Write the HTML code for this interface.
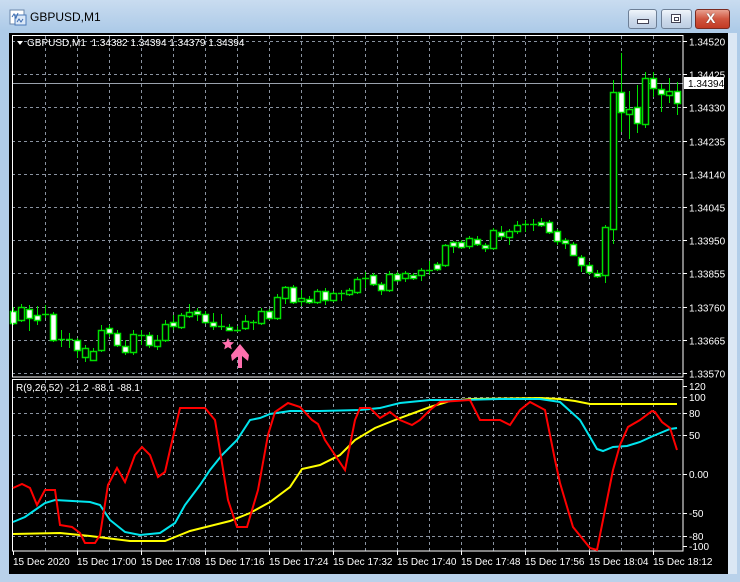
<!DOCTYPE html>
<html><head><meta charset="utf-8"><style>
html,body{margin:0;padding:0;width:740px;height:582px;overflow:hidden;background:#c4d8ee;font-family:"Liberation Sans",sans-serif}
#win{position:absolute;left:0;top:0;width:740px;height:582px;background:linear-gradient(#c9dcf0,#aecbe8 30px,#b9d1ea);}
.title{position:absolute;left:30px;top:10px;font-size:12px;color:#000}
.btn{position:absolute;top:9px;height:18px;border:1px solid #6d7f96;border-radius:3px;background:linear-gradient(#f0f5fb,#cfdcec 50%,#bccde2)}
#black{position:absolute;left:9px;top:33px;width:719px;height:541px;background:#000}
svg{position:absolute;left:0;top:0}
text{font-family:"Liberation Sans",sans-serif;font-size:10px;fill:#fff}
</style></head><body>
<div id="win">
<svg width="20" height="18" style="left:9px;top:9px"><rect x="1" y="1" width="14" height="14" fill="#fff" stroke="#6b87aa"/><rect x="6" y="6" width="11" height="10" fill="#dbe8f7" stroke="#4a79b8"/><path d="M3 8 l2 -3 l2 4 l2 -5" stroke="#3a6ab0" fill="none"/><path d="M8 13 l2 -3 l2 3 l2 -3" stroke="#3a6ab0" fill="none"/></svg>
<div class="title">GBPUSD,M1</div>
<div class="btn" style="left:628px;width:27px"><div style="position:absolute;left:8px;top:9px;width:10px;height:3px;background:#fff;border:1px solid #445"></div></div>
<div class="btn" style="left:661px;width:29px"><div style="position:absolute;left:9px;top:4px;width:8px;height:7px;border:1px solid #445;background:#fff"><div style="position:absolute;left:2px;top:2px;width:3px;height:2px;border:1px solid #445"></div></div></div>
<div class="btn" style="left:695px;width:33px;border-color:#7a2a20;background:linear-gradient(#e8a090,#d0553f 50%,#c23a24)"><div style="position:absolute;left:10px;top:0px;color:#fff;font-weight:bold;font-size:14px;text-shadow:0 0 1px #333">X</div></div>
<div style="position:absolute;left:728px;top:33px;width:9px;height:541px;background:#dbe7f4"></div>
<div id="black"></div>
<svg id="s" width="740" height="582"></svg>
</div>
<script>
var S=document.getElementById('s'),h='';
function L(x1,y1,x2,y2,c,w,d){h+='<line x1="'+x1+'" y1="'+y1+'" x2="'+x2+'" y2="'+y2+'" stroke="'+c+'" stroke-width="'+(w||1)+'"'+(d?' stroke-dasharray="3,3"':'')+'/>';}
function T(x,y,t,f){h+='<text x="'+x+'" y="'+y+'"'+(f?' style="fill:'+f+'"':'')+'>'+t+'</text>';}
var gc='#8a93a0';
// vertical grid
for(var x=45;x<683;x+=32){L(x+.5,36,x+.5,377,gc,1,1);L(x+.5,380,x+.5,551,gc,1,1);}
// main horizontal grid
var pl=['1.34520','1.34425','1.34330','1.34235','1.34140','1.34045','1.33950','1.33855','1.33760','1.33665','1.33570'];
for(var i=0;i<11;i++){var y=Math.round(41+i*33.2)+.5;L(12,y,683,y,gc,1,1);L(683,y,687,y,'#fff');T(689,y+4,pl[i]);}
// indicator grid
var il=[[386,'120'],[397,'100'],[413,'80'],[435,'50'],[474,'0.00'],[513,'-50'],[536,'-80'],[546,'-100']];
il.forEach(function(a){if(a[0]!=386&&a[0]!=546)L(12,a[0]+.5,683,a[0]+.5,gc,1,1);L(683,a[0]+.5,687,a[0]+.5,'#fff');T(689,a[0]+4,a[1]);});
// price line
L(12,83.5,683,83.5,'#9aa2ad');
// candles
var C=[[311,323,307,325,1],[307,320,304,322,0],[309,318,305,331,1],[315,320,306,325,1],[314,315,305,318,2],[314,340,312,342,1],[339,340,330,347,2],[339,341,333,348,2],[340,350,338,358,1],[348,357,345,362,0],[351,360,348,361,0],[330,350,325,352,0],[328,333,325,337,1],[333,345,330,347,1],[346,352,340,355,1],[334,352,330,355,0],[335,336,330,345,2],[335,345,332,348,1],[340,346,335,350,0],[324,340,320,342,0],
[322,326,315,330,1],[315,327,313,329,0],[312,316,304,318,0],[311,313,308,321,1],[314,322,311,324,1],[322,326,313,330,1],[326,327,314,330,2],[327,330,324,331,1],[330,331,326,332,2],[321,328,315,330,0],[322,323,320,330,2],[311,323,308,325,0],[311,318,309,320,1],[297,318,294,320,0],[287,298,286,304,0],[287,302,285,304,1],[298,301,290,306,0],[299,302,296,304,1],[291,302,289,304,0],[291,300,288,305,1],[293,300,291,302,0],[293,294,290,301,2],[290,294,288,296,0],[279,292,277,294,0],[278,279,272,288,2],[275,284,273,286,1],[284,290,282,295,1],[274,290,271,292,0],[274,280,272,282,1],[273,278,271,282,0],[275,277,273,280,1],[270,275,268,281,0],[270,271,261,275,2],[264,269,262,271,1],[245,265,244,267,0],[242,246,241,253,1],[242,247,240,249,1],[238,246,236,249,0],[239,244,236,246,1],[245,247,243,252,1],[230,248,228,250,0],[232,236,226,240,1],[231,237,229,245,0],[225,231,221,234,0],[224,225,220,232,2],[224,225,219,231,2],[222,224,218,227,1],[222,232,220,234,1],[231,241,229,245,1],[240,242,238,249,1],[244,255,242,256,1],[257,265,255,272,1],[265,272,262,275,1],[273,276,270,278,1],[227,275,225,283,0],[92,229,80,244,0],[92,112,53,132,1],[109,114,91,139,0],[107,123,85,133,1],[78,124,72,128,0],[78,88,72,97,1],[89,94,84,112,1],[91,95,78,103,0],[91,103,82,115,1]];
var off=677-8*(C.length-1);
C.forEach(function(c,i){var x=off+8*i;L(x+.5,c[2],x+.5,c[3],'#00e000');
 if(c[4]==2){L(x-3,c[0]+.5,x+4,c[0]+.5,'#00e000',1.5);}
 else{var hh=Math.max(c[1]-c[0],3);h+='<rect x="'+(x-2.5)+'" y="'+(c[0]+.5)+'" width="6" height="'+hh+'" fill="'+(c[4]?'#fff':'#000')+'" stroke="#00e000" stroke-width="1.5"/>';}});
// frames
h+='<rect x="12.5" y="35.5" width="670.5" height="341.5" fill="none" stroke="#fff"/>';
h+='<rect x="12.5" y="379.5" width="670.5" height="171.5" fill="none" stroke="#fff"/>';
// indicator lines
function P(pts,c){h+='<polyline points="'+pts+'" fill="none" stroke="'+c+'" stroke-width="2"/>';}
P('13,534 60,533 90,536 130,541 165,541 175,537 190,531 210,526 230,521 250,513 270,502 290,487 302,469 320,465 340,455 355,440 375,428 400,418 430,407 450,401 470,399 540,398 560,399 575,401 590,404 677,404','#ffff00');
P('13,522 25,517 35,510 45,503 55,500 90,502 100,505 110,520 125,532 140,535 160,533 175,523 185,505 200,485 210,470 222,455 237,440 250,420 260,418 270,414 290,411 320,411 360,410 380,408 400,403 430,400 460,400 500,399 540,399 560,402 580,420 590,437 597,449 603,451 613,447 627,446 640,442 653,436 670,429 677,428','#00e5ee');
P('13,488 22,484 30,488 37,505 45,490 55,490 60,525 72,527 80,533 85,543 95,543 100,535 108,485 117,468 125,482 135,455 142,447 150,455 158,477 165,472 170,450 180,408 205,408 215,420 228,500 237,527 247,527 258,490 268,435 275,412 288,403 300,407 312,420 318,424 325,440 335,455 345,470 355,420 360,408 370,408 380,418 390,412 400,420 412,425 420,420 430,410 440,402 470,400 480,420 500,420 510,425 520,410 530,402 545,410 555,460 560,483 573,527 590,548 597,550 603,520 613,470 620,445 628,427 640,420 652,411 655,412 662,422 670,428 677,450','#ff0000');
// current price box
h+='<rect x="684" y="77" width="40" height="12" fill="#fff"/>';T(688,87,'1.34394','#000');
// header texts
h+='<path d="M17 41 l6 0 l-3 4z" fill="#fff"/>';T(27,46,'GBPUSD,M1&#160; 1.34382 1.34394 1.34379 1.34394');
T(16,391,'R(9,26,52) -21.2 -88.1 -88.1');
// time axis
var tl=['15 Dec 2020','15 Dec 17:00','15 Dec 17:08','15 Dec 17:16','15 Dec 17:24','15 Dec 17:32','15 Dec 17:40','15 Dec 17:48','15 Dec 17:56','15 Dec 18:04','15 Dec 18:12'];
tl.forEach(function(t,i){var x=13+64*i;L(x+.5,551,x+.5,555,'#fff');T(x,565,t);});
// arrow & star
h+='<path d="M238 368 L238 356 L232 361 L231 355 L240 344 L249 355 L248 361 L242 356 L242 368Z" fill="#ff6fae"/>';
h+='<path d="M228 338 l1.8 4 4.3 .4 -3.3 2.8 1 4.2 -3.8 -2.3 -3.8 2.3 1 -4.2 -3.3 -2.8 4.3 -.4z" fill="#ff6fae"/>';
S.innerHTML=h;
</script>
</body></html>
